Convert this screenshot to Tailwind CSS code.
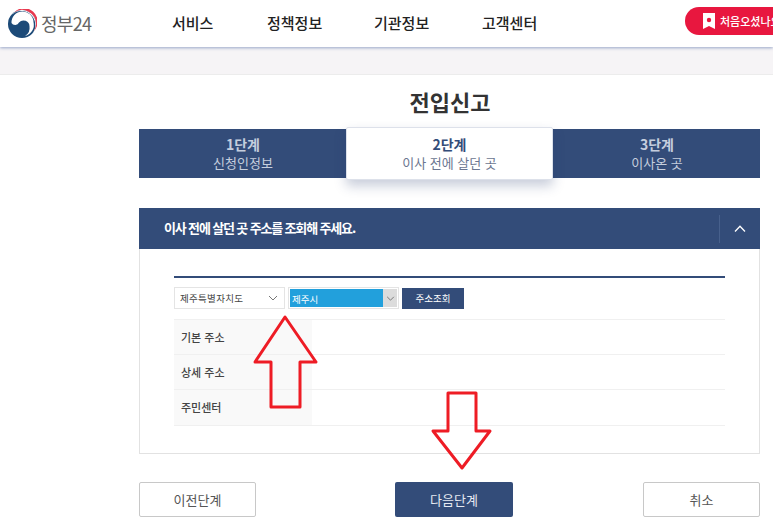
<!DOCTYPE html>
<html lang="ko">
<head>
  <meta charset="UTF-8" />
  <title>전입신고</title>
  <script src="https://cdn.jsdelivr.net/npm/@tailwindcss/browser@4"></script>
</head>
<body class="relative w-[773px] h-[530px] overflow-hidden bg-white font-['Noto_Sans_CJK_KR','Noto_Sans',sans-serif] text-[#333]">

  <!-- Header -->
  <header class="h-[47px] bg-white flex items-center relative shadow-[0_1px_3px_rgba(120,140,185,0.75)]">
    <div class="w-[172px] pl-[7px] flex items-center shrink-0">
      <svg width="30" height="30" viewBox="0 0 30 30">
        <circle cx="15" cy="15" r="14" fill="#1c4a78"/>
        <path d="M3.6 7A14 14 0 0 1 29 15.5A14 14 0 0 1 25 25A12.5 12.5 0 0 0 3.6 7Z" fill="#fff"/>
        <path d="M7 3.5A14 14 0 0 1 29 15.5A14 14 0 0 1 27 22A13 13 0 0 0 7 3.5Z" fill="#e8394f"/>
        <path d="M4.5 14A10.5 10.5 0 0 1 26.5 13A11.5 11.5 0 0 1 18 27A9.5 9.5 0 0 0 22.5 17.5A6 6 0 0 0 12 13.5A4.2 4.2 0 0 1 4.5 14Z" fill="#fff"/>
      </svg>
      <span class="ml-[4px] text-[18px] text-[#666] tracking-[-0.7px]">정부24</span>
    </div>
    <nav class="flex text-[15px] font-medium text-[#222] -ml-px">
      <a class="w-[95px] ml-px">서비스</a>
      <a class="w-[107px]">정책정보</a>
      <a class="w-[108px]">기관정보</a>
      <a class="w-[203px]">고객센터</a>
    </nav>
    <div class="h-[28px] w-[120px] shrink-0 rounded-l-[14px] bg-[#e8173f] text-white text-[11px] font-medium flex items-center pl-[18px] gap-[5px] -mt-[5px]">
      <svg width="12" height="16" viewBox="0 0 12 16"><path d="M0 0H12V16L6 13L0 16Z" fill="#fff"/><circle cx="6" cy="7" r="2.2" fill="#e8173f"/></svg>
      <span class="whitespace-nowrap">처음오셨나요</span>
    </div>
  </header>

  <!-- Band -->
  <div class="h-[28px] bg-[#f6f4f6] border-b border-[#ececec]"></div>

  <main class="ml-[139px] w-[621px]">
    <h1 class="h-[54px] pl-px text-center text-[22px] font-bold text-[#333] leading-[52px]">전입신고</h1>

    <!-- Steps -->
    <div class="flex h-[49px] bg-[#334c79] items-center">
      <div class="w-[207px] pl-px text-center text-[#c5cede]">
        <p class="text-[14px] font-bold leading-[19px] -mt-[1px]">1단계</p>
        <p class="text-[13px] leading-[17px]">신청인정보</p>
      </div>
      <div class="w-[207px] h-[53px] bg-white border border-[#dde1ea] rounded-[2px] text-center flex flex-col justify-center shadow-[0_6px_12px_rgba(40,60,110,0.25)]">
        <p class="text-[14px] font-bold text-[#334c79] leading-[19px] -mt-[1px]">2단계</p>
        <p class="text-[13px] text-[#6b7690] leading-[17px]">이사 전에 살던 곳</p>
      </div>
      <div class="w-[207px] pl-px text-center text-[#c5cede]">
        <p class="text-[14px] font-bold leading-[19px] -mt-[1px]">3단계</p>
        <p class="text-[13px] leading-[17px]">이사온 곳</p>
      </div>
    </div>

    <!-- Panel -->
    <section class="mt-[30px] h-[246px] border border-[#e2e2e2] border-t-0">
      <div class="-mx-px h-[41px] bg-[#334c79] flex items-center pl-[25px] text-white">
        <h2 class="flex-1 text-[13px] font-bold tracking-[-1.15px] -mt-[2px]">이사 전에 살던 곳 주소를 조회해 주세요.</h2>
        <div class="w-[41px] h-[28px] border-l border-[#47608c] flex items-center justify-center">
          <svg width="12" height="7" viewBox="0 0 12 7" fill="none" stroke="#fff" stroke-width="1.3"><path d="M1 6.5L6 1.2L11 6.5"/></svg>
        </div>
      </div>

      <div class="mx-[34px] mt-[27px] border-t-[2px] border-[#334c79]">
        <div class="flex items-center mt-[9px] h-[22px]">
          <div class="w-[111px] h-[22px] bg-white border border-[#e4e4e4] flex items-center justify-between pl-[5px] pr-[6px] text-[9.5px] tracking-[0.3px] text-[#444]">
            <span>제주특별자치도</span>
            <svg width="10" height="6" viewBox="0 0 10 6" fill="none" stroke="#777"><path d="M1 1L5 5L9 1"/></svg>
          </div>
          <div class="ml-[3px] w-[111px] h-[22px] border border-[#e4e4e4] p-[1px] flex">
            <div class="flex-1 bg-[#22a0dc] text-white text-[9.5px] leading-[20px] pl-[2px]">제주시</div>
            <div class="w-[14px] bg-[#dcdcdc] flex items-center justify-center">
              <svg width="9" height="5" viewBox="0 0 10 6" fill="none" stroke="#666"><path d="M1 1L5 5L9 1"/></svg>
            </div>
          </div>
          <button class="ml-[3px] w-[62px] h-[21px] bg-[#334c79] text-white text-[9.5px]">주소조회</button>
        </div>

        <div class="mt-[10px] border-t border-[#f0f0f0]">
          <div class="flex h-[35px] border-b border-[#f0f0f0]">
            <div class="w-[138px] bg-[#f9f9f9] pl-[7px] text-[11px] font-medium text-[#444] leading-[35px]">기본 주소</div>
          </div>
          <div class="flex h-[35px] border-b border-[#f0f0f0]">
            <div class="w-[138px] bg-[#f9f9f9] pl-[7px] text-[11px] font-medium text-[#444] leading-[35px]">상세 주소</div>
          </div>
          <div class="flex h-[36px] border-b border-[#f0f0f0]">
            <div class="w-[138px] bg-[#f9f9f9] pl-[7px] text-[11px] font-medium text-[#444] leading-[35px]">주민센터</div>
          </div>
        </div>
      </div>
    </section>

    <!-- Buttons -->
    <div class="mt-[28px] flex">
      <button class="w-[117px] h-[35px] bg-white border border-[#c8c8c8] rounded-[2px] text-[13px] text-[#555]">이전단계</button>
      <button class="ml-[139px] w-[118px] h-[35px] bg-[#334c79] rounded-[2px] text-[13px] text-[#e6eaf2]">다음단계</button>
      <button class="ml-[130px] w-[117px] h-[35px] bg-white border border-[#c8c8c8] rounded-[2px] text-[13px] text-[#555]">취소</button>
    </div>
  </main>

  <!-- Red annotation arrows -->
  <svg class="absolute left-0 top-0 pointer-events-none" width="773" height="530" fill="none" stroke="#ee1c25" stroke-width="3" stroke-linejoin="round">
    <path d="M285 317L316 362H300V407H271V362H255Z"/>
    <path d="M448 393H476V431H490L462 468L433 431H448Z"/>
  </svg>
</body>
</html>
